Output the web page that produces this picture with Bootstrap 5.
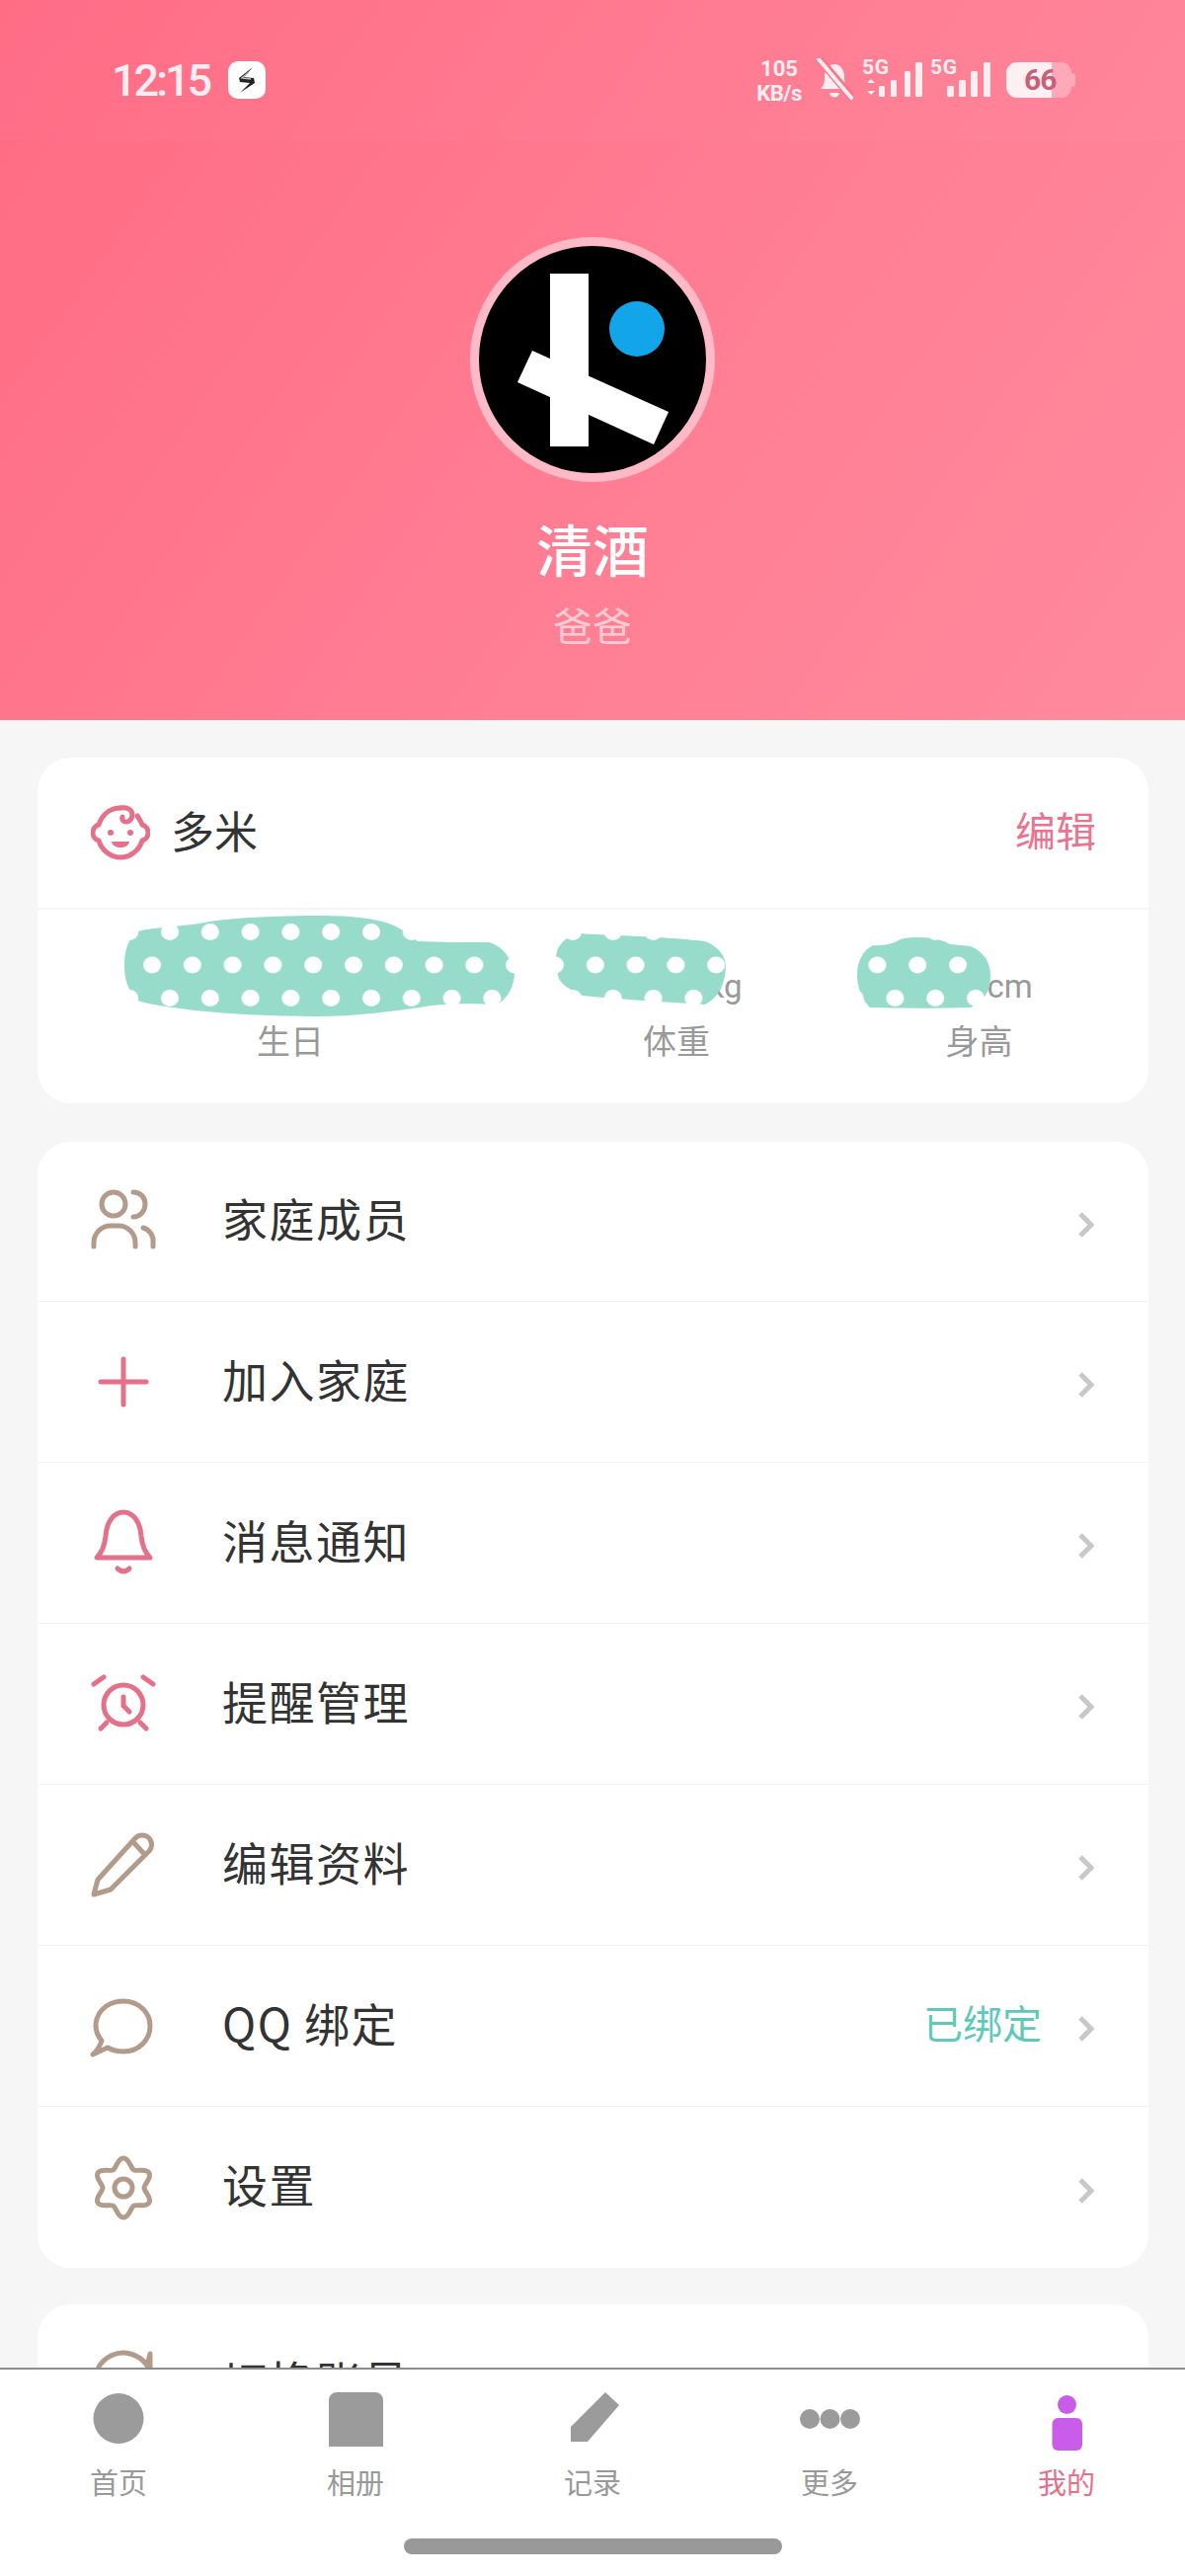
<!DOCTYPE html>
<html lang="zh">
<head>
    <meta charset="UTF-8">
    <meta name="viewport" content="width=device-width, initial-scale=1.0">
    <title>我的</title>
    <link href="https://cdn.jsdelivr.net/npm/bootstrap@5.3.0/dist/css/bootstrap.min.css" rel="stylesheet">
    <style>
        html, body { height: 2608px; overflow: hidden; }
        body { background: #f6f6f6; font-family: "Noto Sans CJK SC", "Noto Sans", sans-serif; color: #333; }

        .hero { height: 729px; background: linear-gradient(125deg, #ff6b83 0%, #ff7f94 60%, #ff8a9d 100%); }
        .status { height: 143px; padding: 59px 111px 0 113px; background: rgba(255,255,255,.02); color: #ffeef1; font-family: Roboto, sans-serif; }
        .clock { font-size: 45px; font-weight: 500; line-height: 41px; letter-spacing: -3px; margin-top: 2px; }
        .app-tile { width: 38px; height: 38px; margin-left: 19px; margin-top: 3px; background: #fff; border-radius: 10px; }
        .speed { width: 50px; font-weight: 700; text-align: center; line-height: 1; margin-right: 12px; }
        .speed-num { font-size: 22px; margin-bottom: 3px; }
        .speed-unit { font-size: 22px; letter-spacing: -.5px; margin-left: -2px; margin-right: -2px; }
        .cell-svg { margin-left: 8px; margin-top: -4px; }
        .cell-label { font: 700 21px Roboto, sans-serif; fill: #ffeef1; }
        .batt { position: relative; width: 66px; height: 36px; margin: 4px 4px 0 15px; border-radius: 11px; background: linear-gradient(90deg, #fff0f3 70%, #ffa9b8 70%); color: #c9607a; font-size: 30px; font-weight: 700; line-height: 36px; padding-left: 18px; letter-spacing: -1px; }
        .batt::after { content: ""; position: absolute; left: 100%; top: 11px; width: 4px; height: 14px; background: #ffa9b8; border-radius: 0 4px 4px 0; }

        .avatar-ring { width: 248px; height: 248px; margin: 97px auto 0; }
        .who { font-size: 57px; font-weight: 500; line-height: 70px; margin-top: 31px; color: #fff; }
        .role { font-size: 40px; line-height: 50px; margin-top: 18px; color: rgba(255,255,255,.62); }

        .sheet { margin: 0 37px 0 38px; border-radius: 34px; overflow: hidden; }
        .baby-head { height: 154px; padding: 0 53px 0 54px; border-bottom: 2px solid #f5f5f5; }
        .baby-name { font-size: 44px; margin-left: 21px; margin-bottom: 6px; }
        .baby-edit { font-size: 41px; color: #e8748f; margin-bottom: 6px; }
        .stat-grid { display: grid; grid-template-columns: 512px 270px 1fr; height: 196px; padding-top: 53px; text-align: center; }
        .stat-value { height: 50px; line-height: 50px; font-size: 33px; color: #999; font-family: Roboto, sans-serif; }
        .stat-label { line-height: 50px; margin-top: 4px; font-size: 34px; color: #999; }
        .push-kg { padding-left: 98px; }
        .push-cm { padding-left: 62px; }
        .smear { position: absolute; left: 0; top: 0; }

        .menu-item { height: 163px; padding: 0 55px 0 51px; border: 0; border-bottom: 2px solid #f3f3f3; font-size: 46px; letter-spacing: 1.5px; color: #333; }
        .menu-item:first-child { height: 161.5px; }
        .menu-item:last-child { border-bottom: 0; }
        .menu-label { margin-left: 64px; margin-bottom: 7px; }
        .menu-note { font-size: 40px; letter-spacing: 0; color: #5fc9b9; margin-right: 37px; margin-bottom: 7px; }
        .chev { margin-top: 7px; fill: none; stroke: #c8c8c8; stroke-width: 5; }
        .ico-line { fill: none; stroke-width: 5; stroke-linecap: round; stroke-linejoin: round; }
        .tone-rose { stroke: #e5708a; }
        .tone-tan { stroke: #b39b8c; }

        .tabs { height: 211px; background: #fff; border-top: 2px solid #8e8e8e; }
        .tab-cell { width: 240px; padding-top: 22px; text-align: center; }
        .tab-cell svg { display: block; margin: 0 auto; }
        .tab-label { font-size: 29px; line-height: 40px; margin-top: 11px; color: #999; }
        .tab-on { color: #e5708a; }
        .home-bar { width: 383px; height: 16px; margin: 38px auto 0; border-radius: 8px; background: #999; }
    </style>
</head>
<body>

<header class="hero text-center">
    <div class="status d-flex justify-content-between text-start">
        <div class="d-flex align-items-start">
            <span class="clock">12:15</span>
            <div class="app-tile">
                <svg width="38" height="38" viewBox="0 0 38 38"><path d="M25 6 11 17l1 4 10 1-10 10 15-10-1-5-10-1z" fill="#222"/><path d="M21 11 14 17l9 1" fill="none" stroke="#bbb" stroke-width="1.5"/></svg>
            </div>
        </div>
        <div class="d-flex align-items-start">
            <div class="speed">
                <div class="speed-num">105</div>
                <div class="speed-unit">KB/s</div>
            </div>
            <svg width="38" height="42" viewBox="0 0 38 42">
                <path d="M5 31c3-3 4-6 4-12 0-7 4-13 10-13s10 6 10 13c0 6 1 9 4 12z" fill="#ffeef1"/>
                <path d="M14 35h10c-1 6-9 6-10 0z" fill="#ffeef1"/>
                <path d="M3 0 37 40" stroke="#ff7389" stroke-width="8"/>
                <path d="M3 1 36 40" stroke="#ffeef1" stroke-width="4" stroke-linecap="round"/>
            </svg>
            <svg class="cell-svg" width="62" height="44" viewBox="0 -4 62 44">
                <text class="cell-label" x="1" y="16" textLength="27">5G</text>
                <path d="M6 25l4-4 4 4zM6 33l4 4 4-4z" fill="#ffeef1"/>
                <g fill="#ffeef1"><rect x="18" y="28" width="6" height="11" rx="1.5"/><rect x="30" y="22" width="6" height="17" rx="1.5"/><rect x="44" y="13" width="6" height="26" rx="1.5"/><rect x="55" y="4" width="7" height="35" rx="1.5"/></g>
            </svg>
            <svg class="cell-svg" width="62" height="44" viewBox="0 -4 62 44">
                <text class="cell-label" x="0" y="16" textLength="27">5G</text>
                <g fill="#ffeef1"><rect x="17" y="28" width="7" height="11" rx="1.5"/><rect x="29" y="22" width="7" height="17" rx="1.5"/><rect x="41" y="13" width="7" height="26" rx="1.5"/><rect x="54" y="4" width="7" height="35" rx="1.5"/></g>
            </svg>
            <div class="batt">66</div>
        </div>
    </div>

    <div class="avatar-ring">
        <svg width="248" height="248" viewBox="0 0 248 248">
            <circle cx="124" cy="124" r="119.5" fill="#000" stroke="#ffb9c7" stroke-width="9"/>
            <rect x="81" y="37" width="39" height="175" fill="#fff"/>
            <polygon points="63,115 201,177 186,210 48,147" fill="#fff"/>
            <circle cx="169" cy="93" r="28" fill="#12a5ea"/>
        </svg>
    </div>
    <div class="who">清酒</div>
    <div class="role">爸爸</div>
</header>

<main>
    <section class="card sheet border-0 position-relative" style="margin-top:38px">
        <div class="baby-head d-flex align-items-center justify-content-between">
            <div class="d-flex align-items-center">
                <svg width="60" height="56" viewBox="0 0 60 56">
                    <path class="ico-line tone-rose" d="M30 3C18 3 11 11 8 20c-4 1-6 5-6 8s2 7 6 8c3 10 12 17 22 17s19-7 22-17c4-1 6-5 6-8s-2-7-6-8c-1-3-3-6-5-9"/>
                    <path class="ico-line tone-rose" d="M30 3c6-1 12 1 12 7 0 4-3 7-6 7s-5-2-4-5"/>
                    <circle cx="20" cy="28" r="3" fill="#e5708a"/><circle cx="40" cy="28" r="3" fill="#e5708a"/>
                    <path d="M21 37h18c-1 8-17 8-18 0z" fill="#e5708a"/>
                </svg>
                <span class="baby-name">多米</span>
            </div>
            <span class="baby-edit">编辑</span>
        </div>
        <div class="stat-grid">
            <div>
                <div class="stat-value"></div>
                <div class="stat-label">生日</div>
            </div>
            <div>
                <div class="stat-value push-kg">kg</div>
                <div class="stat-label">体重</div>
            </div>
            <div>
                <div class="stat-value push-cm">cm</div>
                <div class="stat-label">身高</div>
            </div>
        </div>
        <!-- painted-over values, same as the picture -->
        <svg class="smear" width="1125" height="350" viewBox="38 767 1125 350">
            <defs>
                <pattern id="spots" patternUnits="userSpaceOnUse" x="154" y="977" width="40.8" height="67">
                    <rect width="40.8" height="67" fill="#97dccb"/>
                    <ellipse cx="0" cy="0" rx="9" ry="8.5" fill="#fff"/><ellipse cx="40.8" cy="0" rx="9" ry="8.5" fill="#fff"/>
                    <ellipse cx="0" cy="67" rx="9" ry="8.5" fill="#fff"/><ellipse cx="40.8" cy="67" rx="9" ry="8.5" fill="#fff"/>
                    <ellipse cx="18" cy="33.5" rx="9" ry="8.5" fill="#fff"/>
                </pattern>
            </defs>
            <path fill="url(#spots)" d="M139 943C160 938 190 938 212 933 250 928 290 927 328 927 355 927 380 930 394 935 408 940 415 948 423 953 445 954 470 954 495 954 510 958 519 972 521 987 520 1000 513 1012 503 1017 480 1016 460 1016 437 1018 400 1024 360 1029 321 1029 280 1029 235 1027 197 1023 175 1020 155 1018 139 1013 128 1000 126 990 126 977 126 962 130 950 139 943Z"/>
            <path fill="url(#spots)" d="M583 945C620 947 670 948 714 953 727 958 734 967 735 977 735 995 728 1010 714 1017 670 1014 630 1012 590 1008 577 1002 566 996 565 987 562 978 562 968 565 960 570 952 576 948 583 945Z"/>
            <path fill="url(#spots)" d="M932 949C945 949 955 952 962 956L983 958C997 964 1003 975 1003 987 1003 1000 1000 1012 983 1020 950 1021 915 1021 881 1020 873 1012 868 1000 868 987 868 973 874 962 884 957 895 958 905 955 912 951 918 949 925 949 932 949Z"/>
        </svg>
    </section>

    <section class="card sheet border-0" style="margin-top:39px">
        <div class="list-group list-group-flush">
            <div class="list-group-item menu-item d-flex align-items-center">
                <svg width="72" height="72" viewBox="0 0 72 72"><g class="ico-line tone-tan"><circle cx="26" cy="19" r="12"/><path d="M46 7c7 0 12 5 12 12s-5 13-12 13"/><path d="M6 62v-4a17 17 0 0 1 17-17h8a17 17 0 0 1 17 17v4"/><path d="M56 43a14 14 0 0 1 10 15v4"/></g></svg>
                <span class="menu-label flex-grow-1">家庭成员</span>
                <svg class="chev" width="16" height="26" viewBox="0 0 16 26"><path d="M2 2 13 13 2 24"/></svg>
            </div>
            <div class="list-group-item menu-item d-flex align-items-center">
                <svg width="72" height="72" viewBox="0 0 72 72"><g class="ico-line tone-rose"><path d="M13 36H59M36 13V59"/></g></svg>
                <span class="menu-label flex-grow-1">加入家庭</span>
                <svg class="chev" width="16" height="26" viewBox="0 0 16 26"><path d="M2 2 13 13 2 24"/></svg>
            </div>
            <div class="list-group-item menu-item d-flex align-items-center">
                <svg width="72" height="72" viewBox="0 0 72 72"><g class="ico-line tone-rose"><path d="M9 51h54c-6-6-8-12-9-22-1-14-8-24-18-24s-17 10-18 24c-1 10-3 16-9 22z"/><path d="M30 62q6 6 12 0"/></g></svg>
                <span class="menu-label flex-grow-1">消息通知</span>
                <svg class="chev" width="16" height="26" viewBox="0 0 16 26"><path d="M2 2 13 13 2 24"/></svg>
            </div>
            <div class="list-group-item menu-item d-flex align-items-center">
                <svg width="72" height="72" viewBox="0 0 72 72"><g class="ico-line tone-rose"><circle cx="36" cy="37" r="20"/><path d="M6 16 16 9M66 16 56 9M13 61l6-6M59 61l-6-6"/><path d="M36 29v9l6 6"/></g></svg>
                <span class="menu-label flex-grow-1">提醒管理</span>
                <svg class="chev" width="16" height="26" viewBox="0 0 16 26"><path d="M2 2 13 13 2 24"/></svg>
            </div>
            <div class="list-group-item menu-item d-flex align-items-center">
                <svg width="72" height="72" viewBox="0 0 72 72"><g class="ico-line tone-tan"><path d="M6 66l4-15L48 9a9 9 0 0 1 14 13L23 61z"/><path d="M46 13l12 13"/></g></svg>
                <span class="menu-label flex-grow-1">编辑资料</span>
                <svg class="chev" width="16" height="26" viewBox="0 0 16 26"><path d="M2 2 13 13 2 24"/></svg>
            </div>
            <div class="list-group-item menu-item d-flex align-items-center">
                <svg width="72" height="72" viewBox="0 0 72 72"><g class="ico-line tone-tan"><path d="M14 51C8 44 7 36 9 29 13 17 24 11 36 11 51 11 63 22 63 36 63 51 51 62 36 62 30 62 25 61 20 58L5 65Q11 60 14 51Z"/></g></svg>
                <span class="menu-label flex-grow-1">QQ 绑定</span>
                <span class="menu-note">已绑定</span>
                <svg class="chev" width="16" height="26" viewBox="0 0 16 26"><path d="M2 2 13 13 2 24"/></svg>
            </div>
            <div class="list-group-item menu-item d-flex align-items-center">
                <svg width="72" height="72" viewBox="0 0 72 72"><g class="ico-line tone-tan"><path d="M36 7C42 7 43 16.8 46.5 18.8 50 20.8 59 16.8 62 22 65 27.2 57 33 57 37 57 41 65 46.8 62 52 59 57.2 50 53.2 46.5 55.2 43 57.2 42 67 36 67 30 67 29 57.2 25.5 55.2 22 53.2 13 57.2 10 52 7 46.8 15 41 15 37 15 33 7 27.2 10 22 13 16.8 22 20.8 25.5 18.8 29 16.8 30 7 36 7Z"/><circle cx="36" cy="37" r="9"/></g></svg>
                <span class="menu-label flex-grow-1">设置</span>
                <svg class="chev" width="16" height="26" viewBox="0 0 16 26"><path d="M2 2 13 13 2 24"/></svg>
            </div>
        </div>
    </section>

    <section class="card sheet border-0" style="margin-top:37px">
        <div class="list-group list-group-flush">
            <div class="list-group-item menu-item d-flex align-items-center">
                <svg width="72" height="72" viewBox="0 0 72 72"><g class="ico-line tone-tan"><path d="M8 42A29 29 0 0 1 60 18L63 6V20"/><path d="M64 30A29 29 0 0 1 12 54"/></g></svg>
                <span class="menu-label flex-grow-1">切换账号</span>
                <svg class="chev" width="16" height="26" viewBox="0 0 16 26"><path d="M2 2 13 13 2 24"/></svg>
            </div>
        </div>
    </section>
</main>

<nav class="tabs fixed-bottom">
    <div class="d-flex">
        <div class="tab-cell">
            <svg width="72" height="60" viewBox="0 0 72 60"><circle cx="36" cy="27.5" r="25.5" fill="#9b9b9b"/></svg>
            <div class="tab-label">首页</div>
        </div>
        <div class="tab-cell">
            <svg width="72" height="60" viewBox="0 0 72 60"><path d="M9 9a8 8 0 0 1 8-8h39a8 8 0 0 1 8 8v47H9z" fill="#9b9b9b"/></svg>
            <div class="tab-label">相册</div>
        </div>
        <div class="tab-cell">
            <svg width="72" height="60" viewBox="0 0 72 60"><polygon points="14,51 14,36 49,1 63,14 31,51" fill="#9b9b9b"/></svg>
            <div class="tab-label">记录</div>
        </div>
        <div class="tab-cell">
            <svg width="72" height="60" viewBox="0 0 72 60"><g fill="#9b9b9b"><circle cx="16" cy="28" r="10"/><circle cx="36.5" cy="28" r="10"/><circle cx="57" cy="28" r="10"/></g></svg>
            <div class="tab-label">更多</div>
        </div>
        <div class="tab-cell">
            <svg width="72" height="60" viewBox="0 0 72 60"><g fill="#c95ce8"><circle cx="36.5" cy="13.5" r="9.5"/><rect x="21.5" y="27" width="30.5" height="33" rx="6"/></g></svg>
            <div class="tab-label tab-on">我的</div>
        </div>
    </div>
    <div class="home-bar"></div>
</nav>

<script src="https://cdn.jsdelivr.net/npm/bootstrap@5.3.0/dist/js/bootstrap.bundle.min.js"></script>
</body>
</html>
